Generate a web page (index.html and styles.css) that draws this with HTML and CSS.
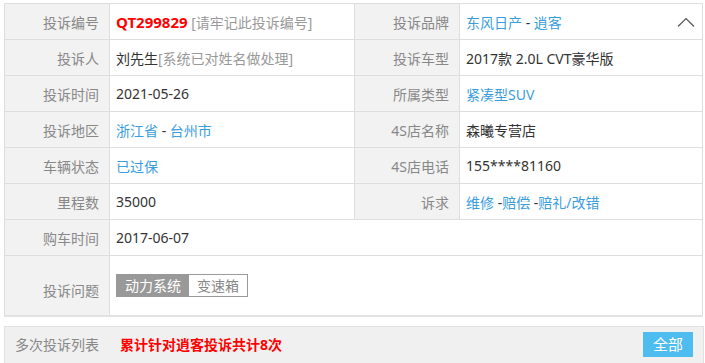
FILE: index.html
```html
<!DOCTYPE html>
<html lang="zh-CN">
<head>
    <meta charset="UTF-8">
    <title>投诉详情</title>
    <link rel="stylesheet" href="styles.css">
</head>
<body>
    <table class="detail">
        <colgroup>
            <col class="c-label">
            <col class="c-value">
            <col class="c-label">
            <col class="c-value2">
        </colgroup>
        <tr>
            <th>投诉编号</th>
            <td><span class="code">QT299829</span> <span class="note">[请牢记此投诉编号]</span></td>
            <th>投诉品牌</th>
            <td class="brand">
                <a href="#">东风日产</a> - <a href="#">逍客</a>
                <svg class="fold" width="18" height="10" viewBox="0 0 18 10"><path d="M1 9.5 L9 1.5 L17 9.5" fill="none" stroke="#555" stroke-width="1.2"/></svg>
            </td>
        </tr>
        <tr>
            <th>投诉人</th>
            <td>刘先生<span class="note">[系统已对姓名做处理]</span></td>
            <th>投诉车型</th>
            <td>2017款 2.0L CVT豪华版</td>
        </tr>
        <tr>
            <th>投诉时间</th>
            <td>2021-05-26</td>
            <th>所属类型</th>
            <td><a href="#">紧凑型SUV</a></td>
        </tr>
        <tr>
            <th>投诉地区</th>
            <td><a href="#">浙江省</a> - <a href="#">台州市</a></td>
            <th>4S店名称</th>
            <td>森曦专营店</td>
        </tr>
        <tr>
            <th>车辆状态</th>
            <td><a href="#">已过保</a></td>
            <th>4S店电话</th>
            <td>155****81160</td>
        </tr>
        <tr>
            <th>里程数</th>
            <td>35000</td>
            <th>诉求</th>
            <td><a href="#">维修</a> -<a href="#">赔偿</a> -<a href="#">赔礼/改错</a></td>
        </tr>
        <tr>
            <th>购车时间</th>
            <td colspan="3">2017-06-07</td>
        </tr>
        <tr class="tall">
            <th>投诉问题</th>
            <td colspan="3">
                <div class="tags">
                    <span class="tag on">动力系统</span><span class="tag">变速箱</span>
                </div>
            </td>
        </tr>
    </table>

    <!-- 多次投诉 -->
    <div class="repeat">
        <span class="repeat-label">多次投诉列表</span>
        <span class="repeat-count">累计针对逍客投诉共计8次</span>
        <a class="all-btn" href="#">全部</a>
    </div>
</body>
</html>
```

FILE: styles.css
```css
* {
    margin: 0;
    padding: 0;
    box-sizing: border-box;
}

body {
    font-family: "Noto Sans", "Noto Sans CJK SC", sans-serif;
    font-size: 14px;
    color: #333;
    background: #fff;
    padding: 3px 2px 0 4px;
}

a {
    color: #3a9de0;
    text-decoration: none;
}

.detail {
    width: 699px;
    border-collapse: collapse;
    border-bottom: 2px solid #e2e2e2;
}

.c-label {
    width: 105px;
}

.c-value {
    width: 245px;
}

.detail th,
.detail td {
    border: 1px solid #dedede;
    height: 36px;
    vertical-align: middle;
}

.detail th {
    background: #f2f2f2;
    color: #888;
    font-weight: normal;
    text-align: right;
    padding-right: 10px;
}

.detail td {
    padding-left: 6px;
    white-space: nowrap;
}

.detail tr:last-child td,
.detail tr:last-child th {
    border-bottom: none;
}

.code {
    color: #f00;
    font-weight: bold;
    font-size: 15px;
}

.note {
    color: #999;
}

.brand {
    position: relative;
}

.fold {
    position: absolute;
    right: 7px;
    top: 13px;
}

.tall th,
.tall td {
    height: 60px;
}

.tall th {
    padding-top: 10px;
}

.tags {
    display: flex;
    border: 1px solid #999;
    width: max-content;
}

.tag {
    height: 21px;
    line-height: 21px;
    padding: 0 8px;
    color: #888;
    background: #fff;
}

.tag.on {
    background: #999;
    color: #fff;
}

.repeat {
    margin-top: 9px;
    width: 700px;
    height: 40px;
    background: #f0f0f0;
    border: 1px solid #e2e2e2;
    border-bottom: none;
    display: flex;
    align-items: flex-start;
    padding: 5px 10px 0 10px;
}

.repeat-label {
    color: #888;
    width: 105px;
    line-height: 26px;
}

.repeat-count {
    color: #f00;
    font-weight: bold;
    line-height: 26px;
    flex: 1;
}

.all-btn {
    background: #4fbcef;
    color: #fff;
    width: 50px;
    height: 25px;
    line-height: 25px;
    text-align: center;
    font-size: 15px;
}
```
